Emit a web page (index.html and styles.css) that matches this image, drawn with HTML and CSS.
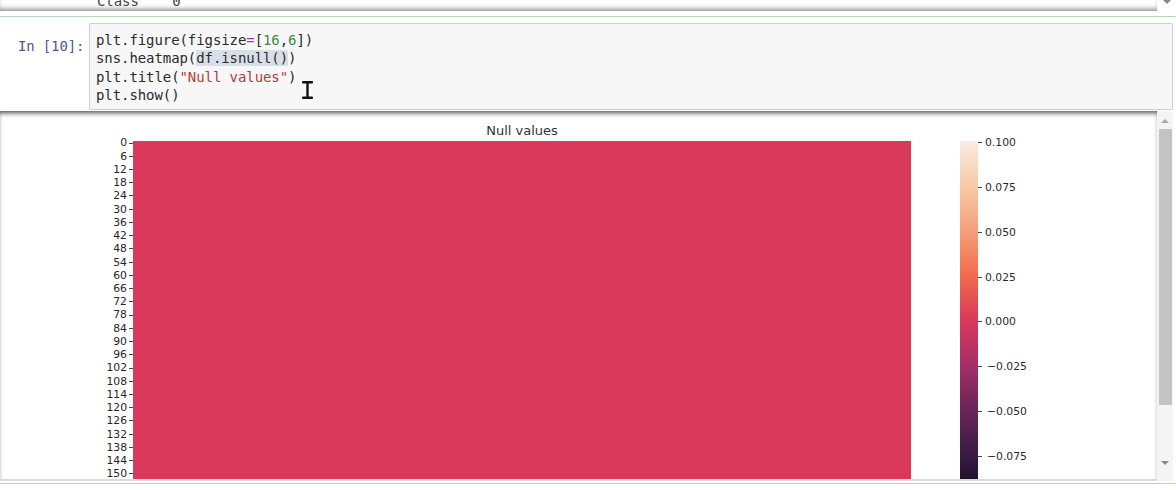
FILE: index.html
```html
<!DOCTYPE html>
<html>
<head>
<meta charset="utf-8">
<link rel="stylesheet" href="styles.css">
</head>
<body>
<div class="prev">
  <div class="prev-view"><div class="prev-text">Class    0</div></div>
  <div class="prev-bar"><span class="arr-down"></span></div>
</div>
<div class="cell">
  <div class="input">
    <div class="prompt">In [10]:</div>
    <div class="code-box">
<pre class="code">plt.figure(figsize<span class="o">=</span>[<span class="m">16</span>,<span class="m">6</span>])
sns.heatmap(<span class="hl">df.isnull()</span>)
plt.title(<span class="s">"Null values"</span>)
plt.show()</pre>
      <svg class="ibeam" width="11" height="18" viewBox="0 0 11 18"><path d="M1 1.2h9M1 16.8h9M5.5 1.2v15.6" stroke="#111" stroke-width="2.4" fill="none" stroke-linecap="round"/></svg>
    </div>
  </div>
  <div class="output">
    <div class="out-view">
      <div class="title">Null values</div>
      <div class="plot">
        <div class="yaxis">
          <div class="yl">0</div><div class="yl">6</div><div class="yl">12</div><div class="yl">18</div><div class="yl">24</div><div class="yl">30</div><div class="yl">36</div><div class="yl">42</div><div class="yl">48</div><div class="yl">54</div><div class="yl">60</div><div class="yl">66</div><div class="yl">72</div><div class="yl">78</div><div class="yl">84</div><div class="yl">90</div><div class="yl">96</div><div class="yl">102</div><div class="yl">108</div><div class="yl">114</div><div class="yl">120</div><div class="yl">126</div><div class="yl">132</div><div class="yl">138</div><div class="yl">144</div><div class="yl">150</div>
        </div>
        <div class="heatmap"></div>
        <div class="cbar"></div>
        <div class="cticks">
          <div class="ct">0.100</div><div class="ct">0.075</div><div class="ct">0.050</div><div class="ct">0.025</div><div class="ct">0.000</div><div class="ct neg">−0.025</div><div class="ct neg">−0.050</div><div class="ct neg">−0.075</div>
        </div>
      </div>
    </div>
    <div class="sbar">
      <span class="arr-up"></span>
      <div class="thumb"></div>
      <span class="arr-down"></span>
    </div>
  </div>
</div>
</body>
</html>
```
FILE: styles.css
```css
* { box-sizing: border-box; }
html, body { margin: 0; padding: 0; }
body {
  width: 1176px;
  height: 490px;
  overflow: hidden;
  background: #fff;
  font-family: "DejaVu Sans", sans-serif;
}

/* previous output (scrolled) */
.prev { display: flex; height: 16px; }
.prev-view {
  flex: 1;
  height: 11px;
  overflow: hidden;
  box-shadow: inset 0 -4px 5px -2px rgba(0,0,0,0.45);
}
.prev-text {
  margin: -8px 0 0 97px;
  font: 14px/18px "DejaVu Sans Mono", monospace;
  letter-spacing: -0.08px;
  color: #444;
  white-space: pre;
}
.prev-bar {
  width: 19px;
  height: 6px;
  display: flex;
  justify-content: center;
  align-items: flex-start;
}

.arr-down, .arr-up {
  display: block;
  width: 0;
  height: 0;
  border-left: 4px solid transparent;
  border-right: 4px solid transparent;
}
.arr-down { border-top: 4px solid #8a8a8a; }
.arr-up { border-bottom: 4px solid #a8a8a8; }

/* cell */
.cell {
  border-top: 1px solid #b9d8bb;
  border-bottom: 1px solid #b9d8bb;
  height: 468px;
}
.input {
  display: flex;
  height: 94px;
  padding: 6px 3px 1px 0;
}
.prompt {
  width: 89px;
  padding: 14px 0 0 18px;
  font: 14px/18px "DejaVu Sans Mono", monospace;
  letter-spacing: -0.15px;
  color: #4b5894;
  white-space: pre;
}
.code-box {
  position: relative;
  flex: 1;
  height: 87px;
  background: #f7f7f7;
  border: 1px solid #cfcfcf;
  border-radius: 2px;
}
.code {
  margin: 0;
  padding: 7px 0 0 6px;
  font: 14px/18.3px "DejaVu Sans Mono", monospace;
  letter-spacing: -0.08px;
  color: #2b2b2b;
}
.code .o { color: #9a3c9a; }
.code .m { color: #3d8a3d; }
.code .s { color: #b53a3a; }
.code .hl { background: #d9dfe9; }
.ibeam {
  position: absolute;
  left: 212px;
  top: 57px;
}

/* output */
.output {
  display: flex;
  height: 372px;
  padding: 0 3px 2px 0;
}
.out-view {
  flex: 1;
  overflow: hidden;
  box-shadow: inset 0 4px 5px -2px rgba(0,0,0,0.7);
  border-bottom: 2px solid #dadada;
  padding-top: 12px;
}
.title {
  width: 778px;
  margin-left: 133px;
  text-align: center;
  font-size: 13px;
  line-height: 16px;
  height: 18px;
  color: #333;
}
.plot {
  display: flex;
  align-items: flex-start;
}
.yaxis {
  width: 133px;
  margin-top: -4.6px;
  display: flex;
  flex-direction: column;
}
.yl {
  height: 13.24px;
  line-height: 13.24px;
  font-size: 10.8px;
  color: #262626;
  text-align: right;
  display: flex;
  justify-content: flex-end;
  align-items: center;
  gap: 2px;
}
.yl::after {
  content: "";
  width: 4px;
  height: 1px;
  background: #444;
}
.heatmap {
  width: 778px;
  height: 360px;
  background: #d9395b;
}
.cbar {
  width: 18px;
  height: 358px;
  margin-left: 49px;
  background: linear-gradient(to bottom,
    #faede1 0%,
    #f7c9a9 12.5%,
    #f4a07a 25%,
    #f06c4c 37.5%,
    #d9395b 50%,
    #a52e68 62.5%,
    #6a2558 75%,
    #3a1b44 87.5%,
    #0e0a20 100%);
}
.cticks {
  display: flex;
  flex-direction: column;
  margin-top: -4.6px;
  gap: 31.75px;
}
.ct {
  height: 13px;
  line-height: 13px;
  font-size: 10.8px;
  color: #2a2a2a;
  display: flex;
  align-items: center;
  gap: 3px;
}
.ct::before {
  content: "";
  width: 4px;
  height: 1px;
  background: #444;
}
.ct.neg { gap: 5px; }

/* scrollbar */
.sbar {
  width: 16px;
  background: #f4f4f4;
  display: flex;
  flex-direction: column;
  align-items: center;
  padding: 8px 0 0 0;
}
.thumb {
  width: 13px;
  height: 276px;
  margin-top: 6px;
  background: #c3c3c3;
}
.sbar .arr-down { margin-top: 56px; }
```
